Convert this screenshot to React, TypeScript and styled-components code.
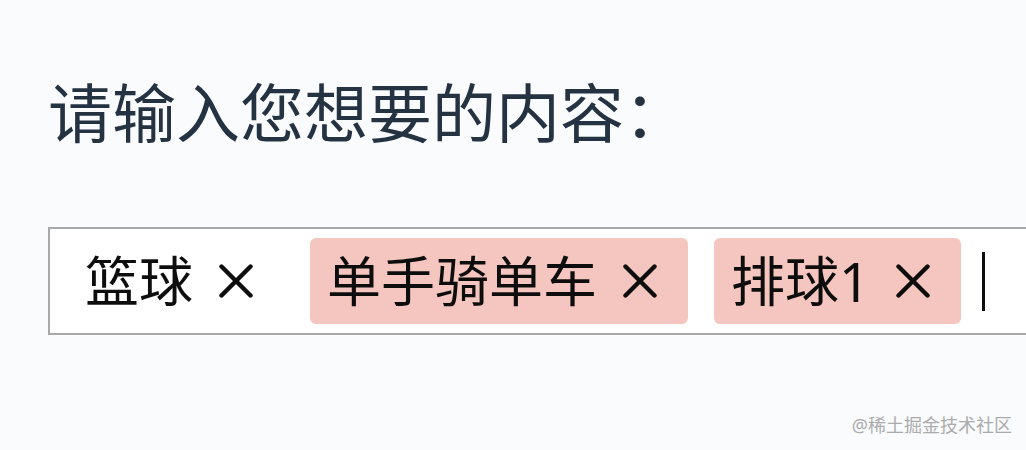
import { createGlobalStyle } from "styled-components";
import styled from "styled-components";

const GlobalStyle = createGlobalStyle`
  html, body {
    margin: 0;
    padding: 0;
    background: #f9fbfd;
    overflow: hidden;
  }
  body {
    font-family: "Noto Sans", "Noto Sans CJK SC", sans-serif;
  }
`

const StyledPage = styled.div`
  position: relative;
  width: 1026px;
  height: 450px;
  padding: 81px 0 0 48px;
  box-sizing: border-box;
`

const StyledTitle = styled.div`
  margin: 0 0 82px;
  color: #243242;
  font-size: 64px;
  line-height: 64px;
  white-space: nowrap;
`

const StyledTagInput = styled.div`
  display: flex;
  align-items: center;
  gap: 26px;
  width: 1000px;
  padding: 9px 18px;
  box-sizing: border-box;
  border: 2px solid #a8a8a8;
  background: #fff;
`

const StyledTag = styled.div<{ $active?: boolean }>`
  display: flex;
  align-items: center;
  gap: 26px;
  height: 86px;
  padding: 0 31px 0 17px;
  border-radius: 6px;
  background: ${p => (p.$active ? "#f5c6bf" : "transparent")};
  color: #0d0d0d;
  font-size: 54px;
  line-height: 1;
  white-space: nowrap;
  flex-shrink: 0;
`

const StyledClose = styled.svg`
  width: 34px;
  height: 34px;
  flex-shrink: 0;
  cursor: pointer;
`

const StyledCaret = styled.span`
  width: 3px;
  height: 59px;
  margin-left: -5px;
  background: #0d0d0d;
  flex-shrink: 0;
`

const StyledWatermark = styled.div`
  position: absolute;
  right: 14px;
  bottom: 14px;
  color: #ababab;
  font-size: 18px;
  line-height: 22px;
`

const tags = [
  { label: "篮球", active: false },
  { label: "单手骑单车", active: true },
  { label: "排球1", active: true },
]

function CloseIcon() {
  return (
    <StyledClose viewBox="0 0 34 34">
      <path d="M2.5 2.5 L31.5 31.5 M31.5 2.5 L2.5 31.5" stroke="#0d0d0d" strokeWidth="4.4" strokeLinecap="round" fill="none" />
    </StyledClose>
  )
}

export default function App() {
  return (
    <>
      <GlobalStyle />
      <StyledPage>
        <StyledTitle>请输入您想要的内容：</StyledTitle>
        <StyledTagInput>
          {tags.map(tag => (
            <StyledTag key={tag.label} $active={tag.active}>
              <span>{tag.label}</span>
              <CloseIcon />
            </StyledTag>
          ))}
          <StyledCaret />
        </StyledTagInput>
        <StyledWatermark>@稀土掘金技术社区</StyledWatermark>
      </StyledPage>
    </>
  )
}
